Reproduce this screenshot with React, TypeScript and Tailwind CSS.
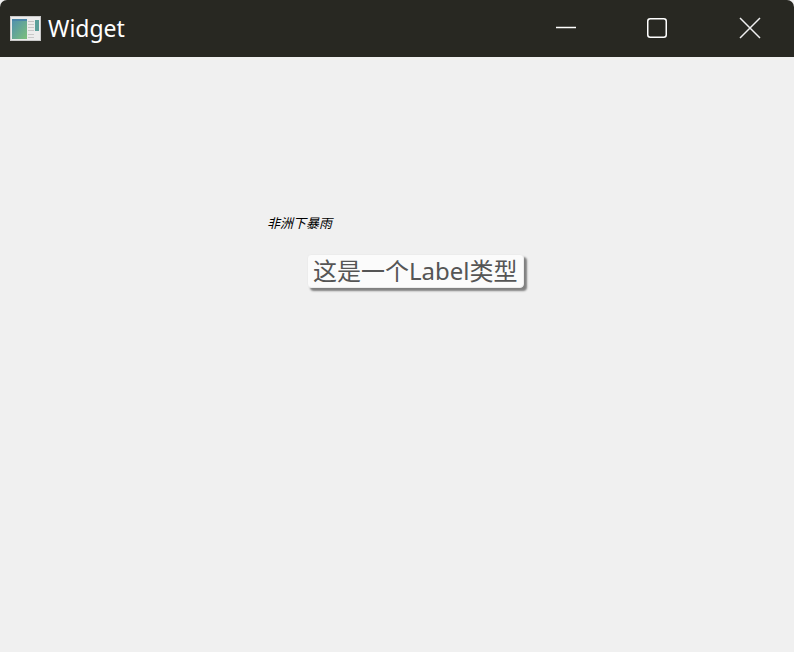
export default function App() {
  return (
    <div className="flex h-[652px] w-[794px] flex-col overflow-hidden bg-[#f0f0f0] font-['Noto_Sans','Noto_Sans_CJK_SC',sans-serif]">
      {/* Title bar */}
      <div className="flex h-[57px] shrink-0 items-center rounded-t-[7px] bg-[#282822] text-white">
        <svg width="31" height="25" viewBox="0 0 31 25" className="ml-[10px] mt-[-1px] shrink-0">
          <defs>
            <linearGradient id="pane" x1="0" y1="0" x2="1" y2="1">
              <stop offset="0" stopColor="#4f8fb0" />
              <stop offset="1" stopColor="#7cc07a" />
            </linearGradient>
          </defs>
          <rect width="31" height="25" fill="#c9c9c9" />
          <rect x="1" y="1" width="29" height="23" fill="#ececec" />
          <rect x="2" y="3" width="15" height="20" fill="url(#pane)" />
          <rect x="2" y="3" width="15" height="2" fill="#4a86a8" />
          <rect x="18" y="5" width="6" height="1" fill="#c2c2c2" />
          <rect x="18" y="8" width="6" height="1" fill="#c8c8c8" />
          <rect x="18" y="11" width="6" height="1" fill="#c8c8c8" />
          <rect x="18" y="14" width="6" height="1" fill="#c8c8c8" />
          <rect x="18" y="18" width="6" height="1" fill="#c8c8c8" />
          <rect x="18" y="21" width="6" height="1" fill="#c8c8c8" />
          <rect x="25" y="4" width="4" height="11" fill="#5a9f9a" />
        </svg>
        <span className="ml-[7px] mt-[-1px] text-[23px] leading-none">Widget</span>
        <div className="ml-auto flex h-full items-center pb-[1px]">
          <button className="flex h-full w-[92px] items-center justify-center">
            <svg width="20" height="20" viewBox="0 0 20 20">
              <path d="M0 9.5H20" stroke="white" strokeWidth="1.5" fill="none" />
            </svg>
          </button>
          <button className="ml-[-1px] flex h-full w-[92px] items-center justify-center">
            <svg width="20" height="20" viewBox="0 0 20 20">
              <rect x="0.75" y="0.75" width="18.5" height="18.5" rx="2.5" stroke="white" strokeWidth="1.5" fill="none" />
            </svg>
          </button>
          <button className="ml-[2px] flex h-full w-[89px] items-center justify-center">
            <svg width="22" height="22" viewBox="0 0 22 22">
              <path d="M1 1L21 21M21 1L1 21" stroke="#f0f0f0" strokeWidth="1.5" fill="none" />
            </svg>
          </button>
        </div>
      </div>

      {/* Widget body */}
      <div className="flex flex-1 flex-col">
        <p className="ml-[267px] mt-[157px] text-[13px] italic leading-[18px] text-black">非洲下暴雨</p>
        <div className="ml-[307px] mt-[22px] flex h-[34px] w-[217px] items-center whitespace-nowrap rounded-[4px] border border-[#ececec] bg-[#fbfbfb] pl-[5px] text-[24px] leading-none text-[#555555] shadow-[3px_3px_2px_#808080]">
          这是一个Label类型
        </div>
      </div>
    </div>
  );
}
